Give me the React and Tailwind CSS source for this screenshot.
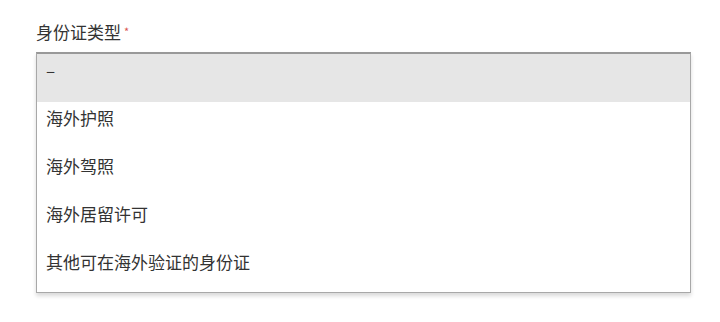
const options = ["–", "海外护照", "海外驾照", "海外居留许可", "其他可在海外验证的身份证"];

export default function App() {
  return (
    <div
      className="w-[720px] h-[322px] bg-white pt-[20px] pl-[36px] text-[#333]"
      style={{ fontFamily: '"Noto Sans CJK SC", "Noto Sans", sans-serif' }}
    >
      <div className="flex items-start h-[32px] text-[17px] leading-[24px]">
        身份证类型
        <span className="ml-[3px] text-[11px] leading-[22px] text-[#d9534f]">*</span>
      </div>
      <div className="w-[655px] border border-[#a8a8a8] border-t-[#999] border-t-2 bg-white shadow-[0_3px_4px_rgba(0,0,0,0.15)]">
        {options.map((o, i) => (
          <div
            key={o}
            className={
              "flex items-start pt-[4px] px-[9px] text-[17px] leading-[24px] " +
              (i === 4 ? "h-[46px] " : "h-[48px] ") +
              (i === 0 ? "bg-[#e6e6e6]" : "bg-white")
            }
          >
            {o}
          </div>
        ))}
      </div>
    </div>
  );
}
